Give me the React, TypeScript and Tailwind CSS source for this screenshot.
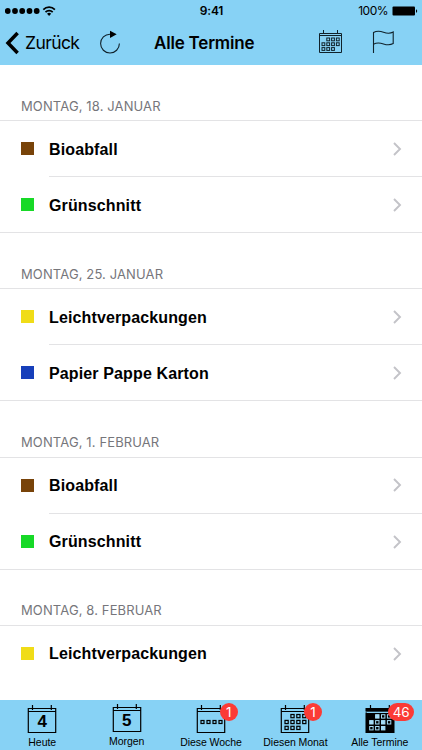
import React from "react";

interface Pickup {
  name: string;
  color: string;
}

interface Day {
  title: string;
  pickups: Pickup[];
}

const BIO: Pickup = { name: "Bioabfall", color: "bg-[#784309]" };
const GREEN: Pickup = { name: "Grünschnitt", color: "bg-[#17d927]" };
const LIGHT: Pickup = { name: "Leichtverpackungen", color: "bg-[#f0dc18]" };
const PAPER: Pickup = { name: "Papier Pappe Karton", color: "bg-[#173fba]" };

const days: Day[] = [
  { title: "MONTAG, 18. JANUAR", pickups: [BIO, GREEN] },
  { title: "MONTAG, 25. JANUAR", pickups: [LIGHT, PAPER] },
  { title: "MONTAG, 1. FEBRUAR", pickups: [BIO, GREEN] },
  { title: "MONTAG, 8. FEBRUAR", pickups: [LIGHT] },
];

// [column, row] cells of a month sheet
const MONTH_CELLS = [
  [1, 0], [2, 0], [3, 0],
  [0, 1], [1, 1], [2, 1], [3, 1],
  [0, 2], [1, 2], [2, 2],
];

// cells drawn solid on the "all" sheet
const SOLID_CELLS = ["1-0", "0-1", "2-1", "2-2"];

const StatusBar = () => (
  <div className="flex h-[21px] items-center pl-[5px] pr-[4px] text-black">
    <div className="flex flex-1 items-center">
      <svg width="52" height="12" viewBox="0 0 52 12">
        {[2.7, 10, 17.2, 24.5, 31.7].map((x) => (
          <circle key={x} cx={x} cy="6" r="2.9" />
        ))}
        <g fill="none" stroke="black" strokeWidth="1.7">
          <path d="M38.3 4.6a8.2 8.2 0 0 1 11.6 0" />
          <path d="M40.5 7.1a5 5 0 0 1 7.2 0" />
        </g>
        <path d="M42 8.8a3 3 0 0 1 4.2 0l-2.1 2.3z" />
      </svg>
    </div>
    <span className="text-[12px] font-semibold tracking-[-0.2px]">9:41</span>
    <div className="flex flex-1 items-center justify-end gap-[4px]">
      <span className="pt-px text-[12px] tracking-[-0.5px]">100%</span>
      <svg width="26" height="10" viewBox="0 0 26 10">
        <rect x="0.5" y="0.5" width="22.5" height="9" rx="1" />
        <path d="M24 3.2c1.6.5 1.6 3.1 0 3.6z" />
      </svg>
    </div>
  </div>
);

const MonthIcon = () => (
  <svg width="24" height="24" viewBox="0 0 24 24" fill="none" stroke="#10222b" strokeWidth="1">
    <path d="M.5 3.5h22v19H.5zM.5 5.5h22M4.5 0v4M18.5 0v4" />
    {MONTH_CELLS.map(([c, r]) => (
      <rect key={`${c}-${r}`} x={3 + c * 4.8} y={8 + r * 4.8} width="2.8" height="2.8" />
    ))}
  </svg>
);

const NavBar = () => (
  <div className="flex h-[44px] items-center">
    <svg className="ml-[5px]" width="16" height="24" viewBox="0 0 16 24" fill="none" stroke="black" strokeWidth="3.5">
      <path d="M12.6 2L3 12l9.6 10" />
    </svg>
    <span className="ml-[4px] w-[54px] pt-px text-[17.5px] tracking-[-0.6px]">Zurück</span>
    <svg className="ml-[20px]" width="24" height="26" viewBox="0 0 24 26">
      <path d="M11 4.2A9.4 9.4 0 1 0 20.4 13.6" fill="none" stroke="#10222b" strokeWidth="1.1" />
      <path d="M11 .8v7.3l6.7-3.9z" />
    </svg>
    <h1 className="ml-[31px] w-[101px] whitespace-nowrap pt-[2px] text-[17px] font-semibold tracking-[-0.2px]">
      Alle Termine
    </h1>
    <div className="ml-[64px] mt-[-3px]">
      <MonthIcon />
    </div>
    <svg className="ml-[29px] mt-[-2px]" width="24" height="26" viewBox="0 0 24 26" fill="none" stroke="#10222b" strokeWidth="1.1">
      <path d="M1.5 24V3.5c3.5-2 6.5-1.6 10-.3s6.5 1.6 9.7-.2v11.6c-3.2 1.8-6.2 1.5-9.7.3s-6.5-1.7-10 .3" />
    </svg>
  </div>
);

const Row = ({ pickup, divided }: { pickup: Pickup; divided: boolean }) => (
  <li className="flex h-[56px]">
    <div className="flex w-[49px] items-center pb-px pl-[21px]">
      <span className={`h-[13px] w-[13px] ${pickup.color}`} />
    </div>
    <div className={`flex flex-1 items-center justify-between pr-[20px] ${divided ? "border-b border-[#e3e3e5]" : ""}`}>
      <span
        className={`font-['Liberation_Sans',Arial,sans-serif] text-[16px] font-bold tracking-[0.13px] text-black ${divided ? "pt-[2px]" : "pt-px"}`}
      >
        {pickup.name}
      </span>
      <svg width="9" height="14" viewBox="0 0 9 14" fill="none" stroke="#c3c3c8" strokeWidth="1.9">
        <path d="M1 1l6 6-6 6" />
      </svg>
    </div>
  </li>
);

const Section = ({ day }: { day: Day }) => (
  <section>
    <h2 className="flex h-[56.2px] items-end border-b border-[#e3e3e5] pb-[4px] pl-[21px] text-[13px] tracking-[0.12px] text-[#76767b]">
      {day.title}
    </h2>
    <ul className="h-[112px] border-b border-[#e3e3e5]">
      {day.pickups.map((p, i) => (
        <Row key={p.name} pickup={p} divided={i < day.pickups.length - 1} />
      ))}
    </ul>
  </section>
);

type SheetKind = "day" | "week" | "month" | "all";

const TabIcon = ({ kind }: { kind: SheetKind }) => (
  <svg width="30" height="30" viewBox="0 0 30 30" fill="none" stroke="black" strokeWidth="1.2">
    <path d="M1.3 4.5h27.4v24H1.3zM1.3 7.5h27.4M5.5 1v5M24.3 1v5" />
    {kind === "week" &&
      [0, 1, 2, 3].map((c) => <rect key={c} x={5 + c * 6} y="16.5" width="3" height="3" />)}
    {kind === "month" &&
      MONTH_CELLS.map(([c, r]) => (
        <rect key={`${c}-${r}`} x={5 + c * 5.9} y={10.5 + r * 5.9} width="3.2" height="3.2" />
      ))}
    {kind === "all" && (
      <>
        <path d="M1.3 4.5h27.4v2H1.3zM1.3 9.5h27.4v19H1.3z" fill="black" />
        <path d="M.7 8.1h28.6" stroke="#87d2f5" strokeWidth=".8" />
        {MONTH_CELLS.map(([c, r]) => (
          <rect
            key={`${c}-${r}`}
            x={4.7 + c * 5.9}
            y={10.7 + r * 5.9}
            width="3.4"
            height="3.4"
            fill={SOLID_CELLS.includes(`${c}-${r}`) ? "#a5dcf6" : "black"}
            stroke="#a5dcf6"
            strokeWidth="1"
          />
        ))}
      </>
    )}
  </svg>
);

interface TabProps {
  label: string;
  kind: SheetKind;
  digit?: string;
  badge?: string;
  className?: string;
}

const Tab = ({ label, kind, digit, badge, className = "" }: TabProps) => (
  <div className={`flex flex-1 flex-col items-center ${className}`}>
    <div className="relative h-[30px] w-[30px]">
      <TabIcon kind={kind} />
      {digit && (
        <span className="absolute inset-x-0 top-[8px] text-center font-['Liberation_Sans',Arial,sans-serif] text-[17px] font-bold leading-[19px]">
          {digit}
        </span>
      )}
      {badge && (
        <span className="absolute left-[23.5px] top-[-1px] flex h-[18px] min-w-[18px] items-center justify-center rounded-full bg-[#fb3b36] px-[4.5px] pt-px text-[13.5px] leading-none tracking-[-0.3px] text-white">
          {badge}
        </span>
      )}
    </div>
    <span className="mt-[2px] whitespace-nowrap font-['Liberation_Sans',Arial,sans-serif] text-[10.5px] leading-[12px] tracking-[-0.05px]">
      {label}
    </span>
  </div>
);

const App: React.FC = () => {
  return (
    <div className="flex h-[750px] w-[422px] flex-col overflow-hidden bg-white font-[Inter,sans-serif] text-black">
      <header className="h-[65px] shrink-0 bg-[#87d2f5]">
        <StatusBar />
        <NavBar />
      </header>

      <main className="min-h-0 flex-1 overflow-hidden">
        {days.map((day) => (
          <Section key={day.title} day={day} />
        ))}
      </main>

      <nav className="flex h-[50px] shrink-0 bg-[#87d2f5] pt-[3px]">
        <Tab label="Heute" kind="day" digit="4" className="pt-px" />
        <Tab label="Morgen" kind="day" digit="5" />
        <Tab label="Diese Woche" kind="week" badge="1" className="pt-px" />
        <Tab label="Diesen Monat" kind="month" badge="1" className="pt-px" />
        <Tab label="Alle Termine" kind="all" badge="46" className="pt-px" />
      </nav>
    </div>
  );
};

export default App;
